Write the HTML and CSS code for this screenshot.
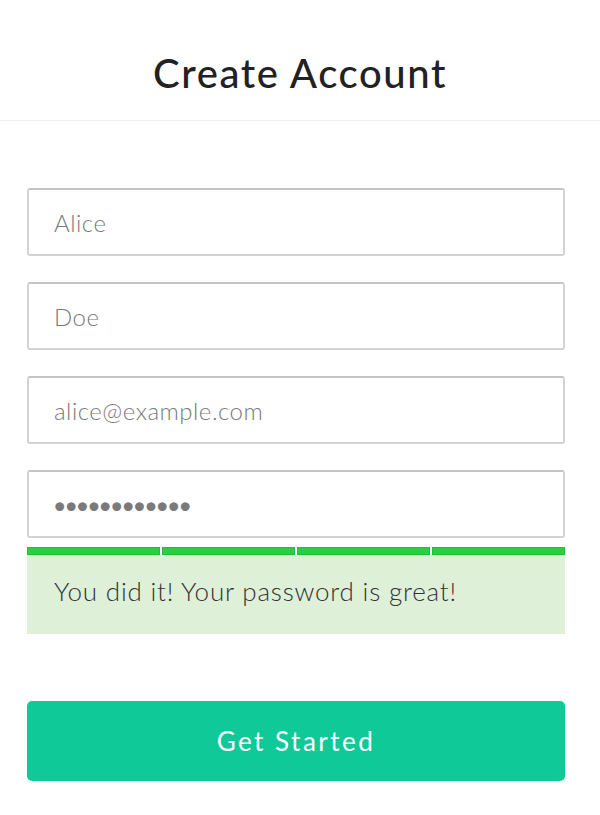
FILE: index.html
```html
<!DOCTYPE html>
<html lang="en">
<head>
<meta charset="utf-8">
<title>Create Account</title>
<link rel="stylesheet" href="styles.css">
</head>
<body>
<header class="header">
  <h1 class="title">Create Account</h1>
</header>
<form class="form">
  <input class="field" type="text" placeholder="Alice">
  <input class="field" type="text" placeholder="Doe">
  <input class="field" type="email" placeholder="alice@example.com">
  <input class="field field-password" type="password" value="abcdefghijkl">
  <div class="strength">
    <span class="seg"></span>
    <span class="seg"></span>
    <span class="seg"></span>
    <span class="seg"></span>
  </div>
  <div class="message">You did it! Your password is great!</div>
  <button class="submit" type="button">Get Started</button>
</form>
</body>
</html>
```
FILE: styles.css
```css
* { box-sizing: border-box; }
html, body {
  margin: 0;
  padding: 0;
  background: #fff;
  font-family: Lato, "Noto Sans", sans-serif;
}
.header {
  height: 121px;
  border-bottom: 1px solid #eeeeee;
  display: flex;
  align-items: center;
  justify-content: center;
}
.title {
  margin: 0;
  font-size: 40px;
  font-weight: 500;
  color: #222;
  letter-spacing: 1.6px;
  position: relative;
  top: 13px;
}
.form {
  padding: 67px 35px 0 27px;
  display: flex;
  flex-direction: column;
}
.field {
  display: block;
  width: 100%;
  height: 68px;
  margin: 0 0 26px;
  padding: 0 25px;
  border: 2px solid #d3d3d3;
  border-top-color: #c4c4c4;
  border-radius: 3px;
  font-family: inherit;
  font-size: 24px;
  font-weight: 300;
  letter-spacing: 0.5px;
  color: #777;
  background: #fff;
  outline: none;
}
.field::placeholder { color: #7a7a7a; opacity: 1; }
.field-password {
  margin-bottom: 9px;
  padding-left: 22px;
  color: #7a7a7a;
  font-size: 30px;
  letter-spacing: -6px;
}
.strength {
  display: flex;
  gap: 2px;
  height: 8px;
}
.seg {
  flex: 1;
  background: #2ecc40;
  border: 1px solid #22c033;
}
.message {
  height: 79px;
  background: #dff0d8;
  padding: 0 27px 8px;
  display: flex;
  align-items: center;
  font-size: 26px;
  font-weight: 300;
  letter-spacing: 0.8px;
  color: #333;
}
.submit {
  margin-top: 67px;
  height: 80px;
  width: 100%;
  border: none;
  border-radius: 5px;
  background: #10c998;
  color: #fff;
  font-family: inherit;
  font-size: 26px;
  font-weight: 400;
  letter-spacing: 2.5px;
  cursor: pointer;
}
```
